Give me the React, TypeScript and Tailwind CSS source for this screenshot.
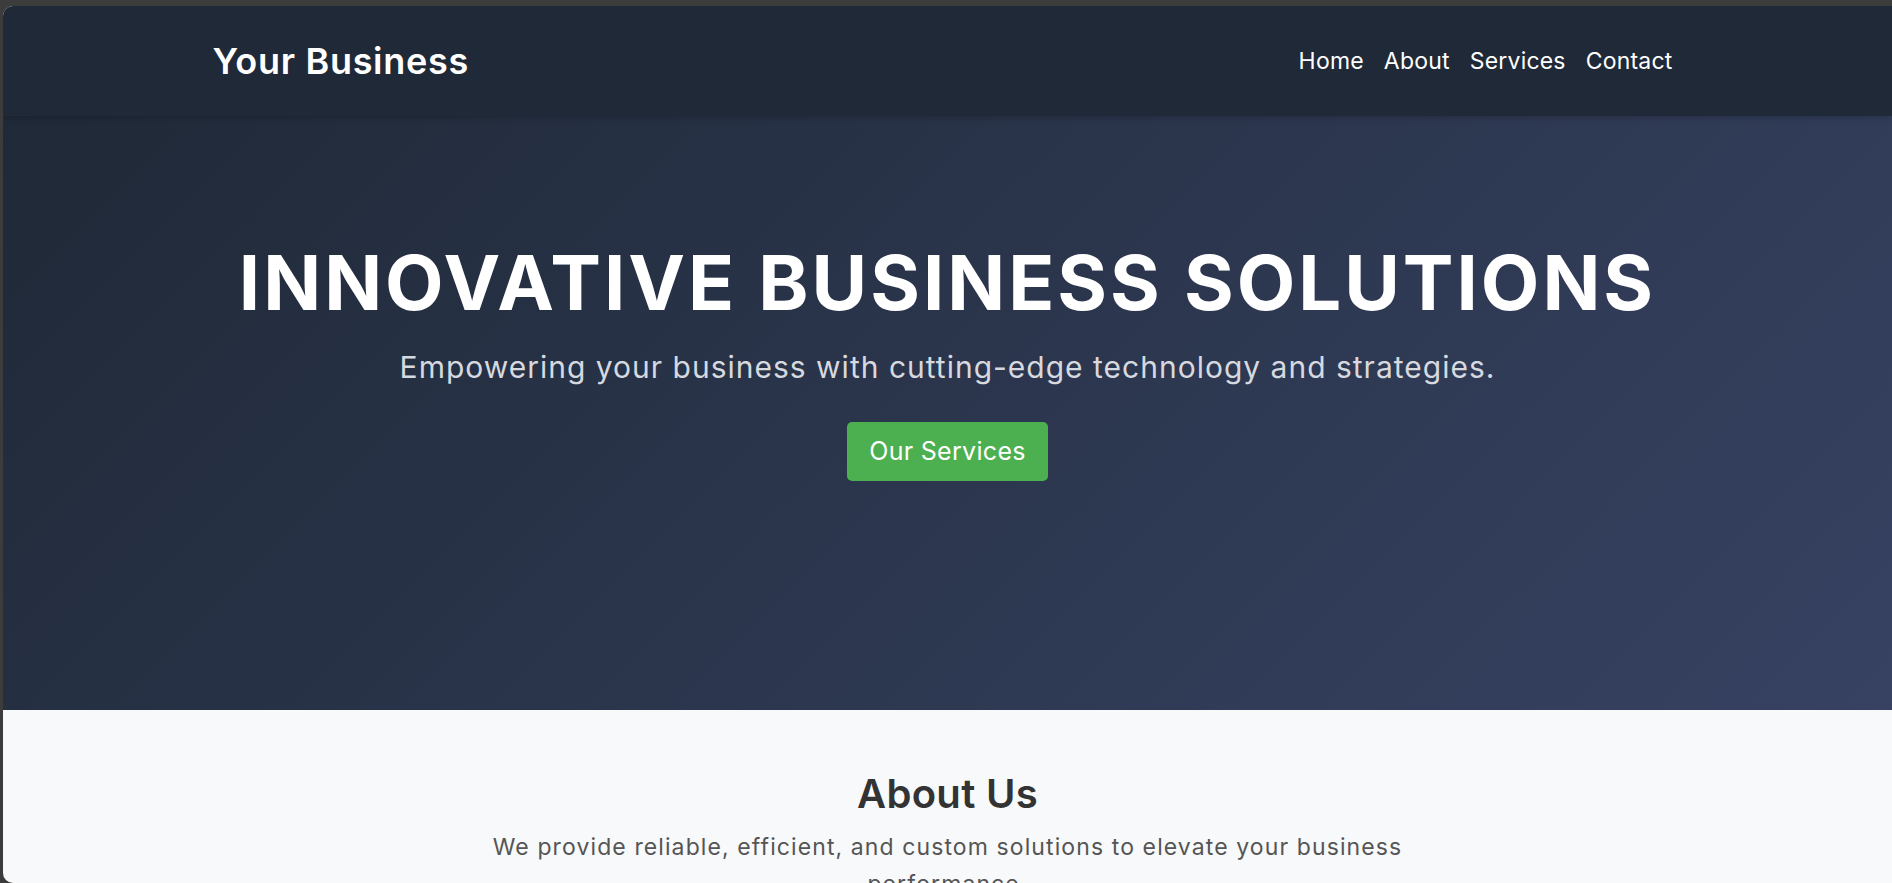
import React from 'react';

const navLinks = ['Home', 'About', 'Services', 'Contact'];

const App: React.FC = () => {
  return (
    <div className="h-screen overflow-hidden bg-[#3c3c3c] pt-[6px] pl-[3px] font-['Inter','Noto_Sans',sans-serif]">
      <div className="h-full overflow-hidden rounded-l-[10px] bg-[#f8f9fa] flex flex-col">
        {/* Header */}
        <header className="relative z-10 h-[110px] shrink-0 bg-[#1f2937] shadow-md">
          <div className="w-[1470px] h-full mx-auto flex items-center justify-between">
            <div className="text-[36px] font-semibold text-white leading-none tracking-[0.7px]">Your Business</div>
            <nav className="flex">
              {navLinks.map((link, index) => (
                <a key={index} href="#" className="text-[23px] text-white leading-none tracking-[0.2px] px-[10px]">
                  {link}
                </a>
              ))}
            </nav>
          </div>
        </header>

        {/* Hero */}
        <section className="h-[594px] shrink-0 bg-[linear-gradient(135deg,#1f2937,#374263)] pt-[121px] flex flex-col items-center text-center">
          <h1 className="text-[76px] leading-[1.2] font-bold text-white tracking-[3px] uppercase">
            Innovative Business Solutions
          </h1>
          <p className="mt-[17px] text-[30px] leading-[1.5] tracking-[1px] text-[#d6d9df]">
            Empowering your business with cutting-edge technology and strategies.
          </p>
          <a
            href="#"
            className="mt-[32px] h-[59px] px-[22px] flex items-center justify-center rounded-[5px] bg-[#4caf50] text-[25px] tracking-[0.3px] text-white"
          >
            Our Services
          </a>
        </section>

        {/* About */}
        <section className="pt-[60px] flex flex-col items-center text-center">
          <h2 className="text-[40px] leading-[1.2] font-semibold tracking-[0.3px] text-[#333333]">About Us</h2>
          <p className="mt-[11px] max-w-[1000px] text-[23px] leading-[1.6] tracking-[1.1px] text-[#555555]">
            We provide reliable, efficient, and custom solutions to elevate your business performance.
          </p>
        </section>
      </div>
    </div>
  );
};

export default App;
